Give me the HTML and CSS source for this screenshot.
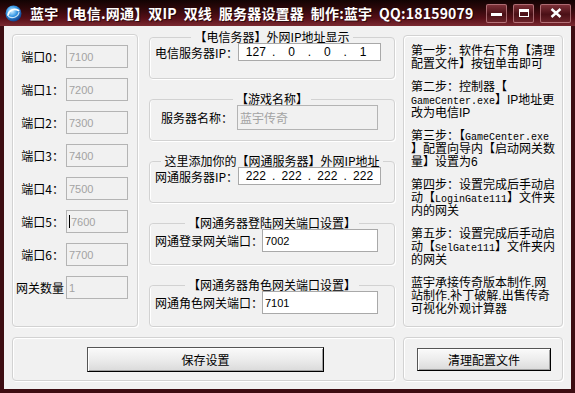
FILE: index.html
```html
<!DOCTYPE html>
<html lang="zh-CN">
<head>
  <meta charset="UTF-8">
  <title>服务器设置器</title>
  <link rel="stylesheet" href="styles.css">
</head>
<body>
  <div class="window">
    <div class="titlebar">
      <svg class="app-icon" viewBox="0 0 16 16">
        <defs>
          <radialGradient id="ball" cx="40%" cy="35%" r="70%">
            <stop offset="0" stop-color="#d8f2ff"/>
            <stop offset="0.45" stop-color="#3a9be8"/>
            <stop offset="1" stop-color="#0a3784"/>
          </radialGradient>
        </defs>
        <circle cx="8" cy="8" r="7.5" fill="url(#ball)"/>
        <path d="M2.8 9.5C3.5 5 8.5 2.8 12.8 5.2" stroke="#fff" stroke-width="1.6" fill="none" stroke-linecap="round"/>
        <path d="M13.2 6.8C12.5 11 7.5 13.2 3.4 10.8" stroke="#e6f6ff" stroke-width="1.1" fill="none" stroke-linecap="round" opacity="0.85"/>
      </svg>
      <span class="title">蓝宇【电信.网通】双IP  双线  服务器设置器  制作:蓝宇  QQ:18159079</span>
      <div class="caption-buttons">
        <span class="cap-btn"><i class="glyph-min"></i></span>
        <span class="cap-btn"><i class="glyph-max"></i></span>
        <span class="cap-btn cap-close">
          <svg viewBox="0 0 12 10" width="12" height="10"><path d="M1.5 1L10.5 9M10.5 1L1.5 9" stroke="#fff" stroke-width="2.4"/></svg>
        </span>
      </div>
    </div>

    <div class="client">
      <div class="layout">
        <div class="group ports">
          <div class="port-row"><span class="port-label">端口0：</span><span class="edit disabled">7100</span></div>
          <div class="port-row"><span class="port-label">端口1：</span><span class="edit disabled">7200</span></div>
          <div class="port-row"><span class="port-label">端口2：</span><span class="edit disabled">7300</span></div>
          <div class="port-row"><span class="port-label">端口3：</span><span class="edit disabled">7400</span></div>
          <div class="port-row spaced"><span class="port-label">端口4：</span><span class="edit disabled">7500</span></div>
          <div class="port-row"><span class="port-label">端口5：</span><span class="edit disabled"><i class="caret"></i>7600</span></div>
          <div class="port-row"><span class="port-label">端口6：</span><span class="edit disabled">7700</span></div>
          <div class="port-row"><span class="port-label">网关数量</span><span class="edit disabled">1</span></div>
        </div>

        <div class="stack">
          <fieldset class="box">
            <legend>【电信务器】外网IP地址显示</legend>
            <div class="line">
              <span class="lbl">电信服务器IP：</span>
              <span class="edit ip"><b>127</b><em>.</em><b>0</b><em>.</em><b>0</b><em>.</em><b>1</b></span>
            </div>
          </fieldset>
          <fieldset class="box">
            <legend>【游戏名称】</legend>
            <div class="line">
              <span class="lbl lbl-right">服务器名称：</span>
              <span class="edit disabled name">蓝宇传奇</span>
            </div>
          </fieldset>
          <fieldset class="box">
            <legend>这里添加你的【网通服务器】外网IP地址</legend>
            <div class="line">
              <span class="lbl">网通服务器IP：</span>
              <span class="edit ip"><b>222</b><em>.</em><b>222</b><em>.</em><b>222</b><em>.</em><b>222</b></span>
            </div>
          </fieldset>
          <fieldset class="box">
            <legend>【网通务器登陆网关端口设置】</legend>
            <div class="line">
              <span class="lbl lbl-wide">网通登录网关端口：</span>
              <span class="edit port">7002</span>
            </div>
          </fieldset>
          <fieldset class="box">
            <legend>【网通务器角色网关端口设置】</legend>
            <div class="line">
              <span class="lbl lbl-wide">网通角色网关端口：</span>
              <span class="edit port">7101</span>
            </div>
          </fieldset>
        </div>

        <div class="group notes">
          <p>第一步：软件右下角【清理<br>配置文件】按钮单击即可</p>
          <p>第二步：控制器【<br><span class="en">GameCenter.exe</span>】IP地址更<br>改为电信IP</p>
          <p>第三步：【<span class="en">GameCenter.exe</span><br>】配置向导内【启动网关数<br>量】设置为6</p>
          <p>第四步：设置完成后手动启<br>动【<span class="en">LoginGate111</span>】文件夹<br>内的网关</p>
          <p>第五步：设置完成后手动启<br>动【<span class="en">SelGate111</span>】文件夹内<br>的网关</p>
          <p>蓝宇承接传奇版本制作.网<br>站制作.补丁破解.出售传奇<br>可视化外观计算器</p>
        </div>

        <div class="group actions actions-wide">
          <button class="btn btn-save">保存设置</button>
        </div>
        <div class="group actions">
          <button class="btn btn-clean">清理配置文件</button>
        </div>
      </div>
    </div>
  </div>
</body>
</html>
```

FILE: styles.css
```css
body {
  margin: 0;
  font-family: "Noto Sans CJK SC", sans-serif;
  font-size: 12px;
  color: #000;
}

.window {
  width: 575px;
  height: 393px;
  display: flex;
  flex-direction: column;
  background: #3d0d12;
}

/* title bar */
.titlebar {
  height: 26px;
  flex-shrink: 0;
  display: flex;
  align-items: center;
  padding: 0 4px 0 5px;
  background: linear-gradient(to bottom, #120303 0%, #2a0709 30%, #560f17 70%, #7a2a31 100%);
  color: #fff;
}

.app-icon {
  width: 17px;
  height: 17px;
  margin-right: 8px;
}

.title {
  flex: 1;
  font-size: 14px;
  font-weight: bold;
  letter-spacing: 0.2px;
  white-space: pre;
  text-shadow: 1px 1px 0 rgba(0, 0, 0, 0.5);
}

.caption-buttons {
  display: flex;
  gap: 6px;
}

.cap-btn {
  width: 21px;
  height: 19px;
  box-sizing: border-box;
  border: 1px solid rgba(230, 170, 175, 0.55);
  border-radius: 2px;
  background: linear-gradient(to bottom, #7c3037, #4a1016 55%, #6a2229);
  display: flex;
  align-items: center;
  justify-content: center;
}

.cap-close {
  width: 31px;
}

.glyph-min {
  width: 11px;
  height: 3px;
  background: #fff;
  margin-top: 3px;
}

.glyph-max {
  width: 10px;
  height: 8px;
  box-sizing: border-box;
  border: 1px solid #fff;
  border-top-width: 3px;
}

/* client area */
.client {
  flex: 1;
  margin: 0 4px 4px;
  padding: 5px 8px 0;
  background: #f1f1f1;
}

.layout {
  display: grid;
  grid-template-columns: 126px 1fr 160px;
  grid-template-rows: 296px 44px;
  column-gap: 8px;
  row-gap: 10px;
}

.group {
  box-sizing: border-box;
  border: 1px solid #d2d2d2;
  border-radius: 4px;
  box-shadow: inset 1px 1px 0 #fff, 1px 1px 0 #fff;
}

/* left column */
.ports {
  margin-top: 3px;
  padding-top: 10px;
}

.port-row {
  display: flex;
  align-items: center;
  height: 23px;
  margin-bottom: 10px;
}

.port-row.spaced {
  margin-top: 3px;
}

.port-label {
  width: 51px;
  text-align: right;
  white-space: nowrap;
  margin-right: 2px;
}

.edit {
  box-sizing: border-box;
  display: flex;
  align-items: center;
  padding-left: 2px;
  border: 1px solid #a9a9a9;
  background: #fff;
  font-family: "Liberation Sans", "Noto Sans CJK SC", sans-serif;
  font-size: 11px;
  white-space: nowrap;
}

.edit.disabled {
  background: #f1f1f1;
  border-color: #b4b4b4;
  color: #a3a3a3;
}

.ports .edit {
  width: 62px;
  height: 23px;
}

.caret {
  width: 1px;
  height: 13px;
  background: #000;
  margin-right: 1px;
}

/* middle column */
.stack {
  margin-left: 3px;
  display: flex;
  flex-direction: column;
  gap: 14px;
}

.box {
  box-sizing: border-box;
  height: 48px;
  margin: 0;
  padding: 0 5px;
  min-inline-size: 0;
  border: 1px solid #d2d2d2;
  border-radius: 4px;
  box-shadow: inset 1px 0 0 #fff, 1px 1px 0 #fff;
  display: flex;
  align-items: center;
}

.box legend {
  margin: 0 auto;
  padding: 0 3px;
  line-height: 12px;
  white-space: nowrap;
}

.line {
  display: flex;
  align-items: center;
}

.lbl {
  width: 83px;
  white-space: nowrap;
}

.lbl-right {
  width: 78px;
  margin-right: 4px;
  text-align: right;
}

.lbl-wide {
  width: 107px;
}

.ip {
  width: 143px;
  height: 18px;
  padding: 0 2px;
  font-size: 12px;
}

.ip b {
  flex: 1;
  font-weight: normal;
  text-align: center;
}

.ip em {
  width: 6px;
  font-style: normal;
  text-align: center;
}

.name {
  width: 141px;
  height: 25px;
  font-family: "Noto Sans CJK SC", sans-serif;
  font-size: 12px;
}

.port {
  width: 116px;
  height: 23px;
}

/* right column */
.notes {
  margin-top: 4px;
  padding: 9px 0 0 7px;
  font-family: "Liberation Sans", "Noto Sans CJK SC", sans-serif;
}

.notes p {
  margin: 0 0 10px;
  line-height: 13px;
  white-space: nowrap;
}

.en {
  font-family: "Liberation Mono", monospace;
  font-size: 10px;
  line-height: 10px;
}

/* bottom row */
.actions {
  display: flex;
  align-items: center;
  justify-content: center;
}

.actions-wide {
  grid-column: 1 / 3;
}

.btn {
  box-sizing: border-box;
  padding: 0;
  font-family: "Noto Sans CJK SC", sans-serif;
  font-size: 12px;
  color: #000;
  border: 1px solid #555;
  border-right-color: #000;
  border-bottom-color: #000;
  background: linear-gradient(to bottom, #fafafa, #ececec 50%, #dadada);
  box-shadow: inset 1px 1px 0 #fff, inset -1px -1px 0 #a0a0a0;
}

.btn-save {
  width: 237px;
  height: 25px;
  margin-left: 4px;
}

.btn-clean {
  width: 134px;
  height: 23px;
  margin-left: 2px;
}
```
